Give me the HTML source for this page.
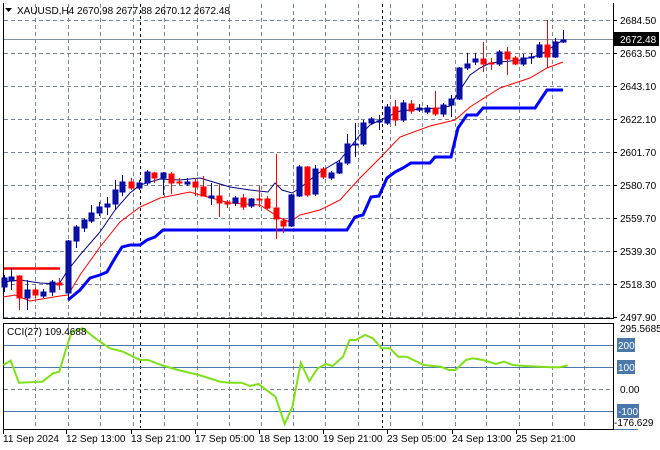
<!DOCTYPE html>
<html><head><meta charset="utf-8"><style>
html,body{margin:0;padding:0;background:#fff;width:660px;height:450px;overflow:hidden}
svg{display:block;font-family:"Liberation Sans",sans-serif;font-size:10px}
</style></head><body>
<svg width="660" height="450" viewBox="0 0 660 450" xmlns="http://www.w3.org/2000/svg">
<rect width="660" height="450" fill="#fff"/>
<g stroke="#7a8796" stroke-dasharray="4,3" stroke-width="1">
<path d="M4 20.5H613M4 53.5H613M4 86.5H613M4 119.5H613M4 152.5H613M4 185.5H613M4 218.5H613M4 251.5H613M4 284.5H613M4 317.5H613"/>
<path d="M35.5 4V318M68.5 4V318M100.5 4V318M133.5 4V318M164.5 4V318M197.5 4V318M229.5 4V318M261.5 4V318M293.5 4V318M325.5 4V318M358.5 4V318M390.5 4V318M422.5 4V318M455.5 4V318M486.5 4V318M519.5 4V318M552.5 4V318M584.5 4V318"/>
<path d="M35.5 324V428M68.5 324V428M100.5 324V428M133.5 324V428M164.5 324V428M197.5 324V428M229.5 324V428M261.5 324V428M293.5 324V428M325.5 324V428M358.5 324V428M390.5 324V428M422.5 324V428M455.5 324V428M486.5 324V428M519.5 324V428M552.5 324V428M584.5 324V428"/>
<path d="M4 389.5H613"/>
</g>
<g stroke="#000" stroke-dasharray="3,3"><path d="M140.5 4V318M382.5 4V318M140.5 324V428M382.5 324V428"/></g>
<path d="M4 39.5H613" stroke="#8090a0"/>
<path d="M3.5 3V318.5H613.5V3M3.5 323.5H613.5V429.5H3.5Z" fill="none" stroke="#000"/>
<path d="M4 268.5H60" stroke="#ff0000" stroke-width="2.5"/>
<polyline fill="none" stroke="#0000ff" stroke-width="3" points="68,300 80,290 90,278 100,275 107,272 115,258 122,247 130,245 140,245 147,240 155,237 163,230 347,230 355,217 363,215 371,197 379,196 387,178 395,172 403,168 411,163 430,163 435,157 451,157 458,128 467,115 477,115 483,108 535,108 547,90 563,90"/>
<polyline fill="none" stroke="#ff0000" stroke-width="1" points="3,297 15,295 30,301 60,296 68,295 80,275 100,247 120,222 140,207 160,198 190,192 200,195 230,203 260,205 280,218 290,222 300,215 320,210 340,200 360,178 380,158 400,137 430,126 455,120 470,107 500,88 530,78 547,68 563,62"/>
<polyline fill="none" stroke="#000080" stroke-width="1" points="3,282 20,280 40,283 59,284 68,270 80,255 100,232 115,210 130,193 140,185 160,179 180,180 200,178 210,181 230,187 250,190 268,192 275,183 282,190 292,193 300,188 320,172 340,160 360,135 370,125 380,120 400,111 420,109 440,108 450,106 460,90 470,75 480,68 490,63 500,62 520,60 540,55 563,40"/>
<g stroke-width="1">
<g stroke="#0000a0" fill="#0a14a0">
<path d="M4.5 275V292M11.5 268V290M27.5 280V310M43.5 289V298M52.5 280V296M68.5 240V300M76.5 225V248M84.5 218V232M91.5 205V223M99.5 202V216M107.5 197V215M115.5 180V210M122.5 175V196M139.5 180V190M147.5 170V185M163.5 172V195M187.5 178V186M211.5 183V205M235.5 196V206M251.5 198V208M291.5 194V227M299.5 165V197M315.5 165V196M331.5 171V180M339.5 160V174M347.5 134V165M355.5 123V157M363.5 120V146M371.5 117V125M379.5 115V130M387.5 104V125M403.5 100V122M419.5 104V112M427.5 105V114M443.5 103V117M451.5 95V117M459.5 67V100M467.5 53V70M475.5 53V65M499.5 50V66M523.5 54V66M531.5 53V64M539.5 42V58M555.5 38V58M563.5 30V43"/>
<rect x="2" y="278" width="5" height="9"/><rect x="9" y="277" width="5" height="4"/><rect x="25" y="290" width="5" height="8"/><rect x="41" y="292" width="5" height="4"/><rect x="50" y="282" width="5" height="10"/><rect x="66" y="241" width="5" height="52"/><rect x="74" y="227" width="5" height="14"/><rect x="82" y="220" width="5" height="8"/><rect x="89" y="213" width="5" height="8"/><rect x="97" y="207" width="5" height="6"/><rect x="105" y="204" width="5" height="3"/><rect x="113" y="190" width="5" height="14"/><rect x="120" y="182" width="5" height="10"/><rect x="137" y="183" width="5" height="5"/><rect x="145" y="172" width="5" height="11"/><rect x="161" y="173" width="5" height="5"/><rect x="185" y="182" width="5" height="2"/><rect x="209" y="196" width="5" height="2"/><rect x="233" y="198" width="5" height="5"/><rect x="249" y="199" width="5" height="7"/><rect x="289" y="195" width="5" height="31"/><rect x="297" y="167" width="5" height="29"/><rect x="313" y="169" width="5" height="25"/><rect x="329" y="173" width="5" height="5"/><rect x="337" y="163" width="5" height="10"/><rect x="345" y="144" width="5" height="19"/><rect x="353" y="144" width="5" height="1"/><rect x="361" y="123" width="5" height="21"/><rect x="369" y="119" width="5" height="4"/><rect x="377" y="121" width="5" height="1"/><rect x="385" y="107" width="5" height="16"/><rect x="401" y="103" width="5" height="17"/><rect x="417" y="108" width="5" height="2"/><rect x="425" y="108" width="5" height="4"/><rect x="441" y="105" width="5" height="9"/><rect x="449" y="99" width="5" height="6"/><rect x="457" y="68" width="5" height="31"/><rect x="465" y="64" width="5" height="4"/><rect x="473" y="59" width="5" height="3"/><rect x="497" y="52" width="5" height="12"/><rect x="521" y="58" width="5" height="6"/><rect x="529" y="57" width="5" height="1"/><rect x="537" y="45" width="5" height="12"/><rect x="553" y="42" width="5" height="15"/><rect x="561" y="40" width="5" height="2"/>
</g>
<g stroke="#ff0000" fill="#ff0000">
<path d="M19.5 275V310M35.5 288V298M59.5 278V290M131.5 178V190M154.5 172V183M171.5 172V194M179.5 178V185M195.5 178V196M203.5 176V196M219.5 184V217M227.5 200V208M243.5 194V210M259.5 186V207M267.5 196V209M276.5 154V239M283.5 218V233M307.5 166V197M323.5 167V179M395.5 100V126M411.5 100V114M435.5 91V116M483.5 42V72M491.5 58V70M507.5 47V75M515.5 56V65M547.5 20V68"/>
<rect x="17" y="276" width="5" height="22"/><rect x="33" y="290" width="5" height="5"/><rect x="57" y="283" width="5" height="2"/><rect x="129" y="182" width="5" height="6"/><rect x="152" y="173" width="5" height="5"/><rect x="169" y="174" width="5" height="9"/><rect x="177" y="182" width="5" height="1"/><rect x="193" y="182" width="5" height="5"/><rect x="201" y="187" width="5" height="9"/><rect x="217" y="196" width="5" height="7"/><rect x="225" y="202" width="5" height="2"/><rect x="241" y="198" width="5" height="9"/><rect x="257" y="199" width="5" height="1"/><rect x="265" y="199" width="5" height="9"/><rect x="274" y="208" width="5" height="11"/><rect x="281" y="221" width="5" height="5"/><rect x="305" y="167" width="5" height="28"/><rect x="321" y="169" width="5" height="8"/><rect x="393" y="107" width="5" height="13"/><rect x="409" y="104" width="5" height="7"/><rect x="433" y="108" width="5" height="6"/><rect x="481" y="59" width="5" height="5"/><rect x="489" y="63" width="5" height="1"/><rect x="505" y="52" width="5" height="7"/><rect x="513" y="58" width="5" height="6"/><rect x="545" y="45" width="5" height="12"/>
</g>
</g>
<path d="M4 345.5H613M4 367.5H613M4 411.5H613" stroke="#4a78a8" stroke-width="1"/>
<polyline fill="none" stroke="#7fe01a" stroke-width="2" points="3.4,365 10.6,360.7 19,382.7 42.4,381.7 53,373.3 59.3,371.7 67.8,343.3 72,331.7 82.6,328.3 97.5,340 110,348.3 123,351.7 140,360 148,360 161,365 178,370 199,375 220,381.7 229,382.7 241.5,382.7 250,386 258.5,384 275.4,396.7 284.7,424 292.4,406.7 300.8,362.7 309.3,381 317.8,368.3 326,364 332.6,366 343,356.7 349.6,340 356,340 365,335 373,338.3 381.4,348.3 389.8,348.3 398.3,356.7 406.8,356.7 423.7,365 440.7,366.7 449,370 455.5,370 466,360 472.5,358.3 483,360 495.8,364 504,361.7 512.7,365 525.4,366 551,367.3 559.3,367.3 567.8,365.3"/>
<path d="M613 20.5h4M613 53.5h4M613 86.5h4M613 119.5h4M613 152.5h4M613 185.5h4M613 218.5h4M613 251.5h4M613 284.5h4M613 317.5h4" stroke="#000"/>
<g fill="#000" font-size="10">
<text x="620" y="24">2684.50</text>
<text x="620" y="57">2663.50</text>
<text x="620" y="90">2643.10</text>
<text x="620" y="123">2622.10</text>
<text x="620" y="156">2601.70</text>
<text x="620" y="189">2580.70</text>
<text x="620" y="222">2559.70</text>
<text x="620" y="255">2539.30</text>
<text x="620" y="288">2518.30</text>
<text x="620" y="321">2497.90</text>
<text x="620" y="332">295.5685</text>
<text x="620" y="393">0.00</text>
<text x="614" y="426">-176.629</text>
</g>
<rect x="614" y="32" width="45" height="14" fill="#000"/>
<text x="620" y="43" fill="#fff" font-size="10">2672.48</text>
<rect x="617" y="338" width="18" height="14" fill="#4a78a8"/><text x="618" y="349" fill="#fff" font-size="10">200</text>
<rect x="617" y="360" width="18" height="14" fill="#4a78a8"/><text x="618" y="371" fill="#fff" font-size="10">100</text>
<rect x="617" y="404" width="22" height="14" fill="#4a78a8"/><text x="618" y="415" fill="#fff" font-size="10">-100</text>
<path d="M614 429.5h24" stroke="#4a78a8"/>
<path d="M5 8h7l-3.5 4z" fill="#000"/>
<text x="17" y="14" fill="#000" font-size="10">XAUUSD,H4  2670.98 2677.88 2670.12 2672.48</text>
<text x="7" y="335" fill="#000" font-size="10">CCI(27) 109.4688</text>
<g fill="#000" font-size="10">
<text x="3" y="442">11 Sep 2024</text>
<text x="66" y="442">12 Sep 13:00</text>
<text x="131" y="442">13 Sep 21:00</text>
<text x="195" y="442">17 Sep 05:00</text>
<text x="259" y="442">18 Sep 13:00</text>
<text x="323" y="442">19 Sep 21:00</text>
<text x="387" y="442">23 Sep 05:00</text>
<text x="452" y="442">24 Sep 13:00</text>
<text x="516" y="442">25 Sep 21:00</text>
</g>
<path d="M3.5 430v4M66.5 430v4M131.5 430v4M195.5 430v4M259.5 430v4M323.5 430v4M387.5 430v4M452.5 430v4M516.5 430v4" stroke="#000"/>
</svg>
</body></html>
